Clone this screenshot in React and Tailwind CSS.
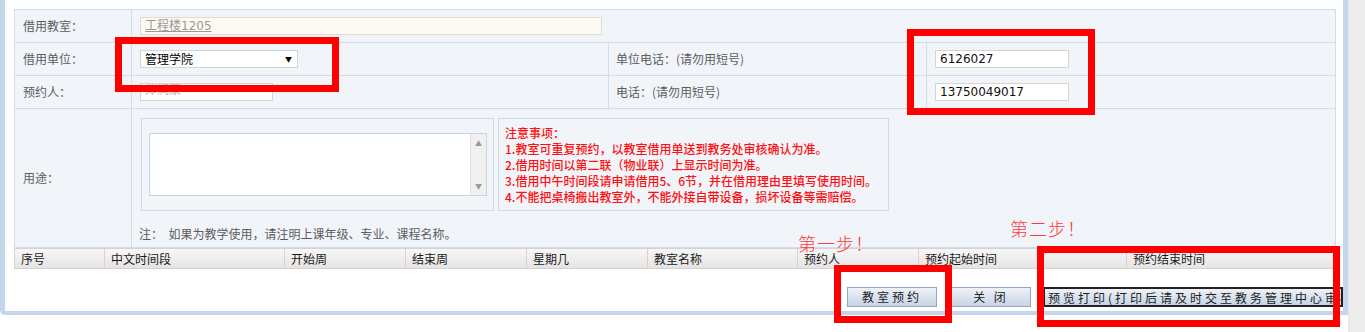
import React from 'react'

const cjk = { fontFamily: '"Noto Sans CJK SC", "Noto Sans", sans-serif' }
const latin = { fontFamily: '"DejaVu Sans", "Noto Sans CJK SC", sans-serif' }

// ─── Table header columns ──────────────────────────────
const columns = [
  { label: '序号', w: 'w-[89px]' },
  { label: '中文时间段', w: 'w-[180px]' },
  { label: '开始周', w: 'w-[121px]' },
  { label: '结束周', w: 'w-[121px]' },
  { label: '星期几', w: 'w-[121px]' },
  { label: '教室名称', w: 'w-[150px]' },
  { label: '预约人', w: 'w-[121px]' },
  { label: '预约起始时间', w: 'w-[208px]' },
  { label: '预约结束时间', w: 'w-[211px]' },
]

const notices = [
  '注意事项：',
  '1.教室可重复预约，以教室借用单送到教务处审核确认为准。',
  '2.借用时间以第二联（物业联）上显示时间为准。',
  '3.借用中午时间段请申请借用5、6节，并在借用理由里填写使用时间。',
  '4.不能把桌椅搬出教室外，不能外接自带设备，损坏设备等需赔偿。',
]

function Label({ children }) {
  return (
    <td className="w-[117px] border border-[#d3dde8] pl-2 text-[12px] text-[#5c5c5c] align-middle">
      {children}
    </td>
  )
}

function TextBox({ value, className = '' }) {
  return (
    <div
      className={`h-[18px] border border-[#d4d4d4] bg-white pl-1 text-[12px] leading-[16px] text-[#111] ${className}`}
      style={latin}
    >
      {value}
    </div>
  )
}

function Button({ children, className = '' }) {
  return (
    <button
      type="button"
      className={`h-[20px] border border-[#91a6c4] bg-gradient-to-b from-[#eef2f8] to-[#c7d4e5] text-[12px] leading-[18px] text-[#222] tracking-[3px] whitespace-nowrap overflow-hidden ${className}`}
    >
      {children}
    </button>
  )
}

function RedBox({ className }) {
  return <div className={`absolute border-[7px] border-[#ff0000] pointer-events-none ${className}`} />
}

export default function App() {
  return (
    <div className="relative w-[1365px] h-[332px] bg-white overflow-hidden" style={cjk}>
      <div className="flex">
        {/* Panel */}
        <div className="w-[1348px] h-[315px] border-l-[5px] border-r-[5px] border-b-[4px] border-[#c3d6ee] rounded-bl-[5px] bg-white pt-[9px] pl-[9px] pr-[7px] overflow-hidden">
          <table className="w-[1322px] border-collapse bg-[#f1f5fa] border border-[#d3dde8]">
            <tbody>
              <tr className="h-[33px]">
                <Label>借用教室：</Label>
                <td colSpan={3} className="border border-[#d3dde8] pl-2">
                  <div
                    className="w-[462px] h-[18px] border border-[#dedbd3] bg-[#fffaf1] pl-1 text-[12px] leading-[16px] text-[#999] underline"
                    style={latin}
                  >
                    工程楼1205
                  </div>
                </td>
              </tr>
              <tr className="h-[33px]">
                <Label>借用单位：</Label>
                <td className="w-[477px] border border-[#d3dde8] pl-2">
                  <div className="w-[158px] h-[18px] border border-[#d4d4d4] bg-white flex items-center justify-between pl-1 pr-[5px] text-[12px] text-black">
                    <span>管理学院</span>
                    <span className="text-[7px] leading-none">▼</span>
                  </div>
                </td>
                <td className="w-[318px] border border-[#d3dde8] pl-[7px] text-[12px] text-[#5c5c5c]">
                  单位电话：(请勿用短号)
                </td>
                <td className="border border-[#d3dde8] pl-2">
                  <TextBox value="6126027" className="w-[134px]" />
                </td>
              </tr>
              <tr className="h-[33px]">
                <Label>预约人：</Label>
                <td className="border border-[#d3dde8] pl-2">
                  <div className="w-[133px] h-[18px] border border-[#d4d4d4] bg-white pl-1 text-[12px] leading-[10px] text-[#b5b5b5] overflow-hidden">
                    郑润康
                  </div>
                </td>
                <td className="border border-[#d3dde8] pl-[7px] text-[12px] text-[#5c5c5c]">
                  电话：(请勿用短号)
                </td>
                <td className="border border-[#d3dde8] pl-2">
                  <TextBox value="13750049017" className="w-[134px]" />
                </td>
              </tr>
              <tr className="h-[139px]">
                <Label>用途：</Label>
                <td colSpan={3} className="border border-[#d3dde8] pl-[9px] pt-[9px] align-top">
                  <div className="flex gap-[4px]">
                    <div className="w-[353px] h-[93px] border border-[#d0dae4] pl-[7px] pt-[14px]">
                      <div className="w-[338px] h-[63px] border border-[#c9d3de] bg-white flex justify-end">
                        <div className="w-[16px] h-full bg-[#f0f0f0] border-l border-[#e2e2e2] flex flex-col justify-between items-center text-[7px] text-[#9a9a9a] py-[4px]">
                          <span>▲</span>
                          <span>▼</span>
                        </div>
                      </div>
                    </div>
                    <div className="w-[391px] h-[93px] border border-[#d0dae4] pl-[6px] pt-[6px] text-[12px] leading-[16px] font-medium text-[#ff1010]">
                      {notices.map((n) => (
                        <div key={n}>{n}</div>
                      ))}
                    </div>
                  </div>
                  <p className="mt-[14px] -ml-[2px] text-[12px] text-[#5c5c5c]">
                    注：&nbsp;&nbsp;如果为教学使用，请注明上课年级、专业、课程名称。
                  </p>
                </td>
              </tr>
            </tbody>
          </table>

          {/* Result list header */}
          <div className="flex w-[1322px] h-[21px] border border-[#d6d2d2] bg-gradient-to-b from-[#f8f7f7] to-[#e6e3e3]">
            {columns.map((c, i) => (
              <div
                key={c.label}
                className={`${c.w} shrink-0 pl-[6px] text-[12px] leading-[19px] text-[#1a1a1a] ${i > 0 ? 'border-l border-[#d6d2d2]' : ''}`}
              >
                {c.label}
              </div>
            ))}
          </div>

          {/* Buttons */}
          <div className="flex gap-[14px] pl-[833px] mt-[18px] w-[1400px]">
            <Button className="w-[90px]">教室预约</Button>
            <Button className="w-[80px]">关 闭</Button>
            <Button className="w-[300px] -ml-[2px] border-2 border-[#222] text-left pl-[3px] tracking-[2.7px]">
              预览打印(打印后请及时交至教务管理中心审核)
            </Button>
          </div>
        </div>

        {/* Window scrollbar strip */}
        <div className="w-[17px] h-[332px] bg-[#ededed] border-l border-[#e4e4e4]" />
      </div>

      {/* Annotations */}
      <RedBox className="left-[115px] top-[37px] w-[224px] h-[55px]" />
      <RedBox className="left-[907px] top-[29px] w-[188px] h-[86px]" />
      <RedBox className="left-[834px] top-[265px] w-[118px] h-[58px]" />
      <RedBox className="left-[1037px] top-[246px] w-[303px] h-[81px]" />
      <div className="absolute left-[798px] top-[232px] text-[18px] leading-[22px] font-light text-[#ff3b3b] tracking-[1px]">
        第一步！
      </div>
      <div className="absolute left-[1010px] top-[217px] text-[18px] leading-[22px] font-light text-[#ff3b3b] tracking-[1px]">
        第二步！
      </div>
    </div>
  )
}
